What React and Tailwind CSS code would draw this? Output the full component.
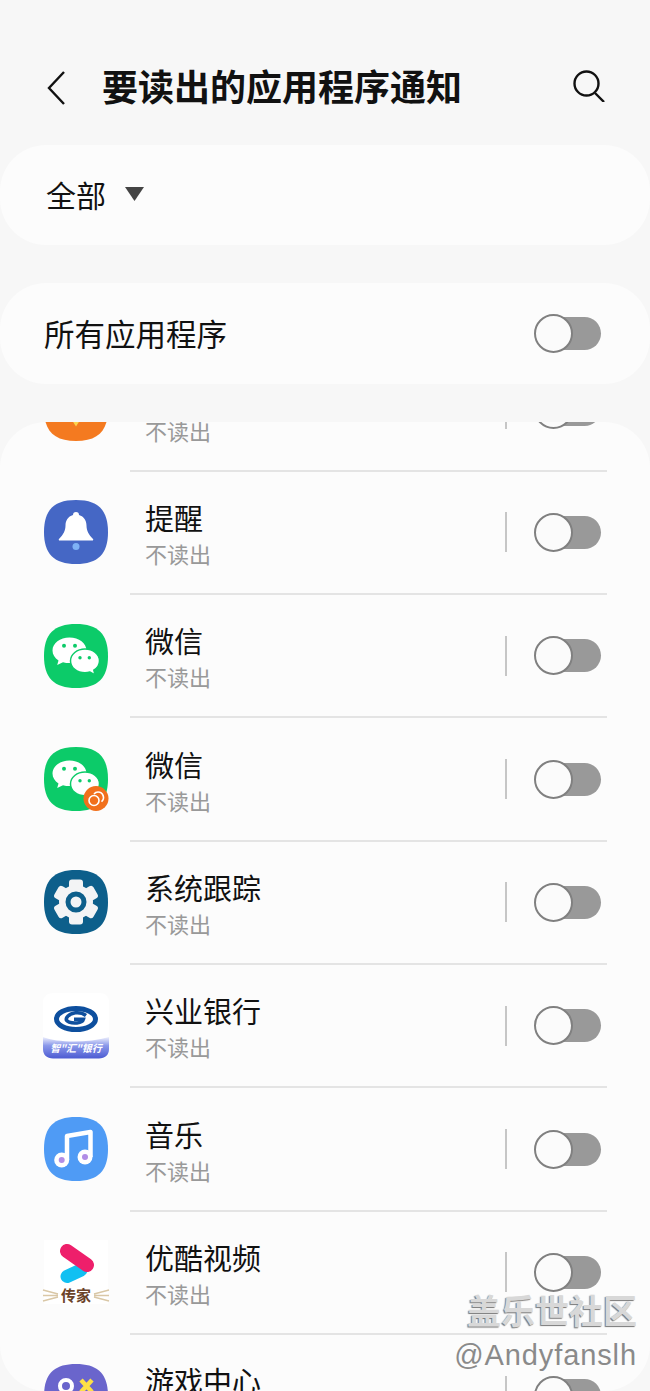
import React from 'react';

const SQUIRCLE = 'M32 0C54 0 64 10 64 32S54 64 32 64 0 54 0 32 10 0 32 0Z';

const IconBase = ({ fill, children }) => (
  <svg viewBox="0 0 64 64" className="w-16 h-16 shrink-0 overflow-visible">
    {fill && <path d={SQUIRCLE} fill={fill} />}
    {children}
  </svg>
);

const OrangeIcon = () => (
  <IconBase fill="#f47a20">
    <path d="M28.5 44h7L32 49.5Z" fill="#fcd34d" />
  </IconBase>
);

const BellIcon = () => (
  <IconBase fill="#4567c5">
    <path
      d="M32 12c2 0 3 1.300 3 3 5 1.500 7.500 5.500 7.500 10.500 0 5 2 9 6.500 13.500.6.800.2 1.500-.8 1.500H15.800c-1 0-1.400-.7-.8-1.500 4.500-4.500 6.500-8.500 6.500-13.500 0-5 2.500-9 7.500-10.500 0-1.700 1-3 3-3Z"
      fill="#fff"
    />
    <circle cx="32" cy="46.500" r="3.500" fill="#7fb2f6" />
  </IconBase>
);

const WechatBubbles = () => (
  <>
    <path
      d="M25.500 13.500C16 13.500 8.500 19.300 8.500 26.500c0 4 2.300 7.500 6 10l-1.300 4.500 5.800-2.800c2 .6 4.200.9 6.500.9 9.500 0 17-5.500 17-12.600s-7.500-13-17-13Z"
      fill="#fff"
    />
    <path
      d="M41 25c-8 0-14.500 5.300-14.500 11.900S33 48.800 41 48.800c1.800 0 3.500-.3 5-.8l5 2.800-1.200-4.600c3.500-2.300 5.700-5.800 5.700-9.300C55.500 30.300 49 25 41 25Z"
      fill="#fff"
      stroke="#0ccb69"
      strokeWidth="1.500"
    />
    <circle cx="20" cy="21.700" r="2" fill="#0ccb69" />
    <circle cx="31" cy="21.700" r="2" fill="#0ccb69" />
    <circle cx="36" cy="33.700" r="1.700" fill="#0ccb69" />
    <circle cx="45.300" cy="33.700" r="1.700" fill="#0ccb69" />
  </>
);

const WechatIcon = () => (
  <IconBase fill="#0ccb69">
    <WechatBubbles />
  </IconBase>
);

const WechatCloneIcon = () => (
  <IconBase fill="#0ccb69">
    <WechatBubbles />
    <circle cx="52" cy="51.500" r="12.500" fill="#f1701c" />
    <circle cx="50" cy="53.500" r="5" fill="none" stroke="#fff" strokeWidth="1.600" />
    <path d="M50 47c1-1.300 2.500-2 4-2a5.500 5.500 0 0 1 3.500 9.700" fill="none" stroke="#fff" strokeWidth="1.600" />
  </IconBase>
);

const GearIcon = () => (
  <IconBase fill="#0d5f8b">
    {[0, 60, 120, 180, 240, 300].map((deg) => (
      <rect key={deg} x="25" y="9.500" width="14" height="12" rx="3" fill="#f3f4f5" transform={`rotate(${deg} 32 32)`} />
    ))}
    <circle cx="32" cy="32" r="17" fill="#f3f4f5" />
    <circle cx="32" cy="32" r="8" fill="#f3f4f5" stroke="#0d5f8b" strokeWidth="5" />
  </IconBase>
);

const BankIcon = () => (
  <IconBase>
    <defs>
      <linearGradient id="bankBar" x1="0" y1="0" x2="0" y2="1">
        <stop offset="0" stopColor="#eef0fc" />
        <stop offset="0.4" stopColor="#8a98ea" />
        <stop offset="1" stopColor="#4c5bd2" />
      </linearGradient>
    </defs>
    <path d="M10-1H55C61-1 65 2 65 8V56C65 62 61 65 55 65H9C3 65-1 62-1 56V8C-1 2 4-1 10-1Z" fill="#fff" />
    <path d="M-1 43C14 49 44 49 65 43V55C65 61 61 64.500 55 64.500H9C3 64.500-1 61-1 55Z" fill="url(#bankBar)" />
    <ellipse cx="32" cy="25" rx="19.500" ry="10.500" fill="none" stroke="#0d4f9e" strokeWidth="5" />
    <path d="M42 21.500C36 17 26 18 22.500 24c-1.500 4 5 5.500 10.500 5 3.500-.3 6-1.800 6.500-3.800H30" fill="none" stroke="#0d4f9e" strokeWidth="3.500" />
    <text x="32" y="58" textAnchor="middle" fontSize="10" fontWeight="700" fontStyle="italic" fill="#fff">智"汇"银行</text>
  </IconBase>
);

const MusicIcon = () => (
  <IconBase fill="#4f9bf5">
    <path d="M23 43V19L46.500 15v25" fill="none" stroke="#fff" strokeWidth="4.500" strokeLinejoin="round" />
    <circle cx="17.700" cy="43" r="7.500" fill="#fff" />
    <circle cx="41" cy="40" r="7.500" fill="#fff" />
    <circle cx="17.700" cy="43" r="3" fill="#b18de6" />
    <circle cx="41" cy="40" r="3" fill="#b18de6" />
  </IconBase>
);

const YoukuIcon = () => (
  <IconBase>
    <path d="M0 0H64V64H0Z" fill="#fff" />
    <path d="M23 36.500 37 30" stroke="#10c0f2" strokeWidth="13" strokeLinecap="round" />
    <path d="M23 11 43 25" stroke="#ee1f6b" strokeWidth="14" strokeLinecap="round" />
    <text x="32" y="61" textAnchor="middle" fontSize="15" fontWeight="700" fill="#6b4228">传家</text>
    <path d="M-1 50 14 54M-1 55.500H14M-1 61 14 57M50 54 65 50M50 55.500H65M50 57 65 61" stroke="#d9c7a6" strokeWidth="1.400" />
  </IconBase>
);

const GameIcon = () => (
  <IconBase fill="#6a65cc">
    <circle cx="22" cy="22" r="6" fill="none" stroke="#fff" strokeWidth="4" />
    <path d="M37 16 48 28M48 16 37 28" stroke="#fde047" strokeWidth="4.500" />
  </IconBase>
);

const Toggle = () => (
  <div className="flex items-center w-[61px] h-[33px] rounded-full bg-[#999999] shrink-0">
    <div className="w-[39px] h-[39px] -ml-[6px] shrink-0 rounded-full bg-[#fbfbfb] border-2 border-[#808080]" />
  </div>
);

const apps = [
  { id: 'lost', title: '', Icon: OrangeIcon },
  { id: 'reminder', title: '提醒', Icon: BellIcon },
  { id: 'wechat', title: '微信', Icon: WechatIcon },
  { id: 'wechat2', title: '微信', Icon: WechatCloneIcon },
  { id: 'trace', title: '系统跟踪', Icon: GearIcon },
  { id: 'cib', title: '兴业银行', Icon: BankIcon },
  { id: 'music', title: '音乐', Icon: MusicIcon },
  { id: 'youku', title: '优酷视频', Icon: YoukuIcon },
  { id: 'game', title: '游戏中心', Icon: GameIcon },
];

const AppRow = ({ title, Icon }) => (
  <div className="h-[123.33px] flex flex-col shrink-0">
    <div className="flex-1 flex items-center pl-[44px] pr-[49px]">
      <Icon />
      <div className="flex-1 ml-[37px] pt-[5px]">
        <p className="text-[29px] leading-[36px] h-[36px] text-[#111111]">{title}</p>
        <p className="text-[22px] leading-[36px] text-[#999999]">不读出</p>
      </div>
      <div className="w-[2px] h-[40px] bg-[#c6c6c6] mr-[33px]" />
      <Toggle />
    </div>
    <div className="h-[2px] ml-[130px] mr-[43px] bg-[#e4e4e4]" />
  </div>
);

export default function App() {
  return (
    <div className="relative w-[650px] h-[1391px] overflow-hidden flex flex-col bg-[#f7f7f7] font-['Noto_Sans_CJK_SC',sans-serif]">
      <header className="h-[145px] pt-[31px] pl-[47px] pr-[45px] flex items-center shrink-0">
        <svg viewBox="0 0 18 34" className="w-[18px] h-[34px] shrink-0" fill="none" stroke="#111" strokeWidth="2.400">
          <path d="M17 1 2 17l15 16" />
        </svg>
        <h1 className="flex-1 ml-[37px] -mt-[6px] text-[36px] leading-none font-bold text-[#111111]">要读出的应用程序通知</h1>
        <svg viewBox="0 0 32 32" className="w-8 h-8 shrink-0 -mt-[4px]" fill="none" stroke="#111" strokeWidth="2.400">
          <circle cx="13.500" cy="13.500" r="12" />
          <path d="M22 23l9 9" />
        </svg>
      </header>

      <div className="h-[100px] shrink-0 rounded-[46px] bg-[#fcfcfc] pl-[46px] flex items-center">
        <span className="text-[30px] leading-none text-[#111111] -mt-[2px]">全部</span>
        <svg viewBox="0 0 19 14" className="w-[19px] h-[14px] ml-[19px] -mt-[2px]">
          <path d="M0 0H19L9.500 14Z" fill="#444444" />
        </svg>
      </div>

      <div className="h-[101px] mt-[38px] shrink-0 rounded-[46px] bg-[#fcfcfc] pl-[44px] pr-[49px] flex items-center justify-between">
        <span className="text-[30.500px] leading-none text-[#111111]">所有应用程序</span>
        <Toggle />
      </div>

      <div className="flex-1 mt-[38px] rounded-[46px] bg-[#fcfcfc] overflow-hidden">
        <div className="-mt-[73.5px] flex flex-col">
          {apps.map((app) => (
            <AppRow key={app.id} title={app.title} Icon={app.Icon} />
          ))}
        </div>
      </div>

      <div className="absolute right-[13px] bottom-[18px] flex flex-col items-end pointer-events-none">
        <span className="text-[34px] leading-[44px] font-bold text-[#d8d8d8] [text-shadow:-1px_1px_1px_#777777]">盖乐世社区</span>
        <span className="mt-[5px] text-[29px] leading-[36px] tracking-[0.9px] text-[#8a8a8a] font-['Liberation_Sans',sans-serif]">@Andyfanslh</span>
      </div>
    </div>
  );
}
